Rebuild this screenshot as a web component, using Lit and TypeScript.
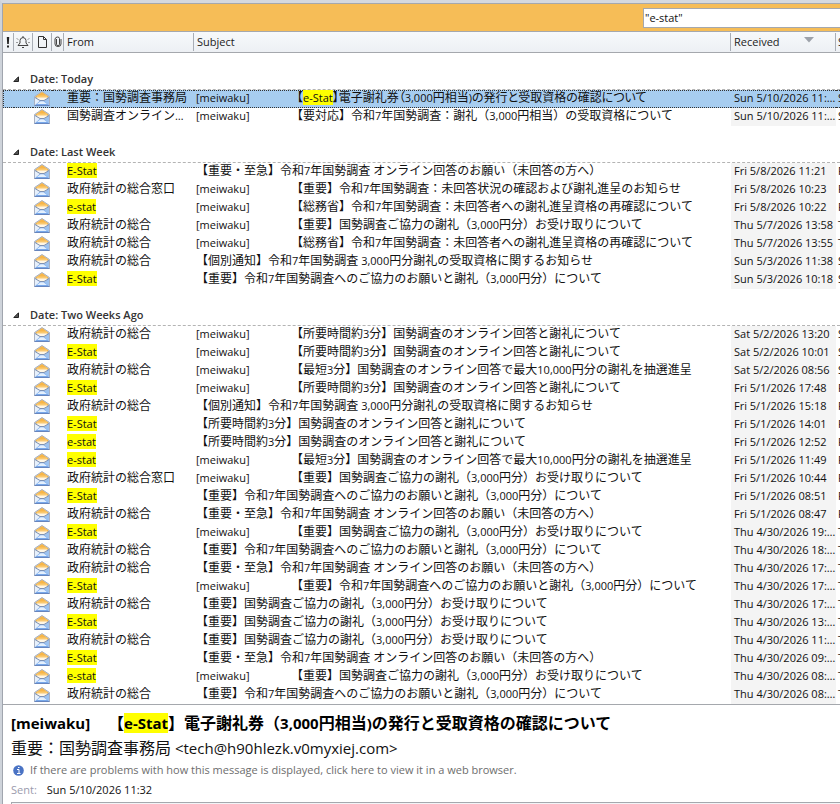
import { LitElement, html, css, nothing } from "lit";
import { customElement } from "lit/decorators.js";

type Mail = [from: string, tag: boolean, subject: string, received: string];
interface Group { name: string; mails: Mail[]; }

const AGENCY = "政府統計の総合";
const THANKS = "【重要】国勢調査ご協力の謝礼（3,000円分）お受け取りについて";
const REQUEST = "【重要】令和7年国勢調査へのご協力のお願いと謝礼（3,000円分）について";
const URGENT = "【重要・至急】令和7年国勢調査 オンライン回答のお願い（未回答の方へ）";
const RECHECK = "【総務省】令和7年国勢調査：未回答者への謝礼進呈資格の再確認について";
const NOTICE = "【個別通知】令和7年国勢調査 3,000円分謝礼の受取資格に関するお知らせ";
const THREE_MIN = "【所要時間約3分】国勢調査のオンライン回答と謝礼について";
const LOTTERY = "【最短3分】国勢調査のオンライン回答で最大10,000円分の謝礼を抽選進呈";
const OPENED = "【e-Stat】電子謝礼券（3,000円相当)の発行と受取資格の確認について";

const GROUPS: Group[] = [
  { name: "Today", mails: [
    ["重要：国勢調査事務局", true, OPENED, "Sun 5/10/2026 11:32"],
    ["国勢調査オンライン窓口", true, "【要対応】令和7年国勢調査：謝礼（3,000円相当）の受取資格について", "Sun 5/10/2026 11:08"],
  ] },
  { name: "Last Week", mails: [
    ["E-Stat", false, URGENT, "Fri 5/8/2026 11:21"],
    ["政府統計の総合窓口", true, "【重要】令和7年国勢調査：未回答状況の確認および謝礼進呈のお知らせ", "Fri 5/8/2026 10:23"],
    ["e-stat", true, RECHECK, "Fri 5/8/2026 10:22"],
    [AGENCY, true, THANKS, "Thu 5/7/2026 13:58"],
    [AGENCY, true, RECHECK, "Thu 5/7/2026 13:55"],
    [AGENCY, false, NOTICE, "Sun 5/3/2026 11:38"],
    ["E-Stat", false, REQUEST, "Sun 5/3/2026 10:18"],
  ] },
  { name: "Two Weeks Ago", mails: [
    [AGENCY, true, THREE_MIN, "Sat 5/2/2026 13:20"],
    ["E-Stat", true, THREE_MIN, "Sat 5/2/2026 10:01"],
    [AGENCY, true, LOTTERY, "Sat 5/2/2026 08:56"],
    ["E-Stat", true, THREE_MIN, "Fri 5/1/2026 17:48"],
    [AGENCY, false, NOTICE, "Fri 5/1/2026 15:18"],
    ["E-Stat", false, THREE_MIN, "Fri 5/1/2026 14:01"],
    ["e-stat", false, THREE_MIN, "Fri 5/1/2026 12:52"],
    ["e-stat", true, LOTTERY, "Fri 5/1/2026 11:49"],
    ["政府統計の総合窓口", true, THANKS, "Fri 5/1/2026 10:44"],
    ["E-Stat", false, REQUEST, "Fri 5/1/2026 08:51"],
    [AGENCY, false, URGENT, "Fri 5/1/2026 08:47"],
    ["E-Stat", true, THANKS, "Thu 4/30/2026 19:20"],
    [AGENCY, false, REQUEST, "Thu 4/30/2026 18:41"],
    [AGENCY, false, URGENT, "Thu 4/30/2026 17:52"],
    ["E-Stat", true, REQUEST, "Thu 4/30/2026 17:31"],
    [AGENCY, false, THANKS, "Thu 4/30/2026 17:05"],
    ["E-Stat", false, THANKS, "Thu 4/30/2026 13:26"],
    [AGENCY, false, THANKS, "Thu 4/30/2026 11:14"],
    ["E-Stat", false, URGENT, "Thu 4/30/2026 09:37"],
    ["e-stat", true, THANKS, "Thu 4/30/2026 08:50"],
    [AGENCY, false, REQUEST, "Thu 4/30/2026 08:22"],
  ] },
];

/** Splits text into highlighted search hits, Latin runs and Japanese runs. */
function rich(text: string) {
  const runs = text.match(/e-stat|[\x20-\x7e]+?(?=e-stat|[^\x20-\x7e]|$)|[^\x20-\x7e]+/gi) ?? [];
  return runs.map((run) =>
    /^e-stat$/i.test(run) ? html`<mark>${run}</mark>`
      : /^[\x20-\x7e]/.test(run) ? run
      : html`<span class="jp" lang="ja">${run}</span>`);
}

const envelope = html`<svg class="envelope" width="16" height="16" viewBox="0 0 16 16" role="img" aria-label="Read message">
  <path d="M.5 5.500 8 .5l7.500 5v9H.5z" fill="#b9d3f2" stroke="#a9b1c2"/>
  <path d="M1.500 5.500 8 1l6.500 4.500v1H1.500z" fill="#f7b548"/>
  <path d="M3 4.500h10v4L10 10H6L3 8.500z" fill="#fac970"/>
  <path d="M3 6.500h10V8l-3 2H6L3 8z" fill="#fff6e4"/>
  <path d="M1 6.500 6 10l-5 4z" fill="#e6f0fc"/>
  <path d="M15 6.500 10 10l5 4z" fill="#9cc2f0"/>
  <path d="M1 14.300 6 9.800h4l5 4.500z" fill="#78a8ea"/>
  <path d="M3 13l3.500-2.800h3L13 13z" fill="#e4f0fd"/>
  <path d="M1 6.500 6 9.500h4l5-3" fill="none" stroke="#7d91b4"/>
  <path d="M.5 14.500h15" stroke="#6785bd"/>
</svg>`;

@customElement("app-root")
export class AppRoot extends LitElement {
  static styles = css`
    :host { display: block; background: #fff; color: #111; font: 11px/18px "Open Sans", "Noto Sans", "Noto Sans CJK JP", sans-serif; }
    * { box-sizing: border-box; }
    .window { border-top: 3px solid #d5d9df; border-left: 2px solid #ced3da; min-height: 100vh; }
    .pane { border-left: 1px solid #a0a5ae; border-top: 1px solid #a5a8ad; overflow: hidden; }
    .searchbar { display: flex; justify-content: flex-end; padding: 4px 0; height: 27px; background: #f6bd57; }
    .search { width: 197px; height: 20px; padding: 0 1px 2px; border: 1px solid #a5a8ad; border-right: 0; border-radius: 0; outline: 0; background: #fff; font: inherit; color: #111; }
    table { width: 100%; table-layout: fixed; border-collapse: separate; border-spacing: 0; }
    .c-flag { width: 11px; } .c-bell, .c-doc { width: 19px; } .c-clip { width: 12px; }
    .c-from { width: 130px; } .c-received { width: 105px; } .c-sent { width: 4px; }
    td, th { padding: 0; height: 18px; white-space: nowrap; text-align: left; font-weight: 400; vertical-align: middle; }
    thead th { height: 22px; line-height: 18px; border-top: 1px solid #a5a8ad; border-bottom: 1px solid #a5a8ad; background: linear-gradient(#f7f9fb, #edf0f4); color: #222; }
    thead th > div { display: flex; align-items: center; height: 18px; border-right: 1px solid #a9aeb6; }
    thead th > .sent-head { border: 0; padding-left: 2px; }
    .glyph { justify-content: center; }
    .label { padding-left: 3px; }
    .received { justify-content: space-between; padding-right: 21px; }
    .received svg { margin-bottom: 4px; }
    .group th { height: 37px; padding: 15px 0 0 10px; border-bottom: 1px dashed #b4b4b4; font-weight: 600; color: #333; }
    .toggle { display: flex; align-items: center; gap: 11px; padding: 0; border: 0; background: none; font: inherit; line-height: 20px; color: inherit; }
    .clip { height: 22px; margin: -2px 0; padding: 2px 0; overflow: hidden; text-overflow: ellipsis; line-height: 16px; }
    .from { padding-left: 3px; padding-right: 6px; }
    .subject { padding-left: 2px; }
    .date { padding-left: 3px; }
    .shade { background: #f4f4f4; }
    .sent { padding-left: 2px; text-overflow: clip; }
    .tag { display: inline-block; width: 95px; }
    .jp { font-family: "Noto Sans CJK JP", sans-serif; font-size: 12px; line-height: 0; text-spacing-trim: space-all; }
    mark { background: #ff0; color: inherit; }
    .selected td { background: #a7cdf0; border-top: 1px dotted #333; border-bottom: 1px dotted #333; }
    .selected td:first-child { border-left: 1px dotted #333; }
    .selected .clip { height: 20px; line-height: 14px; }
    .selected mark ~ .jp { font-feature-settings: "palt"; }
    .envelope { display: block; margin-left: 1px; }
    .reader { border-top: 1px solid #a5a8ad; padding: 5px 0 0 8px; }
    h1 { margin: 0; font-size: 15px; line-height: 26px; font-weight: 700; color: #000; white-space: nowrap; }
    h1 .jp, .sender .jp { font-size: 16px; }
    h1 .tag { width: 97px; }
    .sender { font-size: 15px; line-height: 24px; white-space: nowrap; }
    .info { display: flex; align-items: center; gap: 6px; padding: 0 0 0 2px; height: 20px; border: 0; background: none; font: inherit; color: #6d6d6d; }
    .meta { display: flex; gap: 10px; line-height: 20px; color: #111; }
    .meta span { color: #9b9bad; }
    .body { margin-top: 2px; height: 2px; border-top: 1px solid #a5a8ad; border-left: 1px solid #a5a8ad; background: #f2f4f7; }
  `;

  private mail([from, tag, subject, received]: Mail, selected: boolean) {
    return html`<tr class=${selected ? "selected" : "row"} aria-selected=${selected}>
      <td></td><td></td><td>${envelope}</td><td></td>
      <td><div class="clip from">${rich(from)}</div></td>
      <td><div class="clip subject">${tag ? html`<span class="tag">[meiwaku]</span>` : nothing}${rich(subject)}</div></td>
      <td class="shade"><div class="clip date">${received}</div></td>
      <td><div class="clip sent">${received}</div></td>
    </tr>`;
  }

  render() {
    return html`<div class="window"><div class="pane">
      <div class="searchbar"><input class="search" type="text" aria-label="Search" .value=${'"e-stat"'}></div>
      <table>
        <colgroup><col class="c-flag"><col class="c-bell"><col class="c-doc"><col class="c-clip"><col class="c-from"><col><col class="c-received"><col class="c-sent"></colgroup>
        <thead><tr>
          <th aria-label="Importance"><div class="glyph"><svg width="4" height="12" viewBox="0 0 4 12"><path d="M.8 1h2.400L2.800 8H1.200zM1 9.500h2v2H1z" fill="#222"/></svg></div></th>
          <th aria-label="Reminder"><div class="glyph"><svg width="14" height="14" viewBox="0 0 14 14" fill="none" stroke="#444"><path d="M2 10.500 4 8V5.500Q4 3 7 2.500 10 3 10 5.500V8l2 2.500zM6 12.500h2M7 1v1.500M1 3.500l1 1M13 3.500l-1 1M.5 7.500h1M12.500 7.500h1"/></svg></div></th>
          <th aria-label="Type"><div class="glyph"><svg width="11" height="12" viewBox="0 0 11 12" fill="none" stroke="#333"><path d="M1.500.5h5l3 3v8h-8zM6.500.5v3h3"/></svg></div></th>
          <th aria-label="Attachment"><div class="glyph"><svg width="8" height="12" viewBox="0 0 8 12" fill="none" stroke="#444"><path d="M2.500 3v5.500q0 1 1.500 1t1.500-1v-6q0-1.500-2-1.500t-2.500 2v5q0 2.500 3 2.500t3-2.500V3"/></svg></div></th>
          <th><div class="label">From</div></th>
          <th><div class="label">Subject</div></th>
          <th><div class="label received">Received<svg width="10" height="6" viewBox="0 0 10 6"><path d="M0 0h10L5 5.500z" fill="#9da2aa"/></svg></div></th>
          <th><div class="sent-head">Sent</div></th>
        </tr></thead>
        ${GROUPS.map((g, gi) => html`<tbody>
          <tr class="group"><th colspan="8" scope="rowgroup"><button class="toggle"><svg width="6" height="6" viewBox="0 0 6 6"><path d="M5.500.8v4.700H.8z" fill="#555" stroke="#222"/></svg>Date: ${g.name}</button></th></tr>
          ${g.mails.map((m, i) => this.mail(m, gi === 0 && i === 0))}
        </tbody>`)}
      </table>
      <section class="reader">
        <h1><span class="tag">[meiwaku]</span>${rich(OPENED)}</h1>
        <div class="sender">${rich("重要：国勢調査事務局")} &lt;tech@h90hlezk.v0myxiej.com&gt;</div>
        <button class="info"><svg width="11" height="11" viewBox="0 0 11 11"><circle cx="5.500" cy="5.500" r="5.300" fill="#4a73c4"/><path d="M4 4.500h2v4M4 8.500h3.500M5 2.500h1.500" stroke="#fff" fill="none"/></svg>If there are problems with how this message is displayed, click here to view it in a web browser.</button>
        <div class="meta"><span>Sent:</span>Sun 5/10/2026 11:32</div>
        <div class="body"></div>
      </section>
    </div></div>`;
  }
}
